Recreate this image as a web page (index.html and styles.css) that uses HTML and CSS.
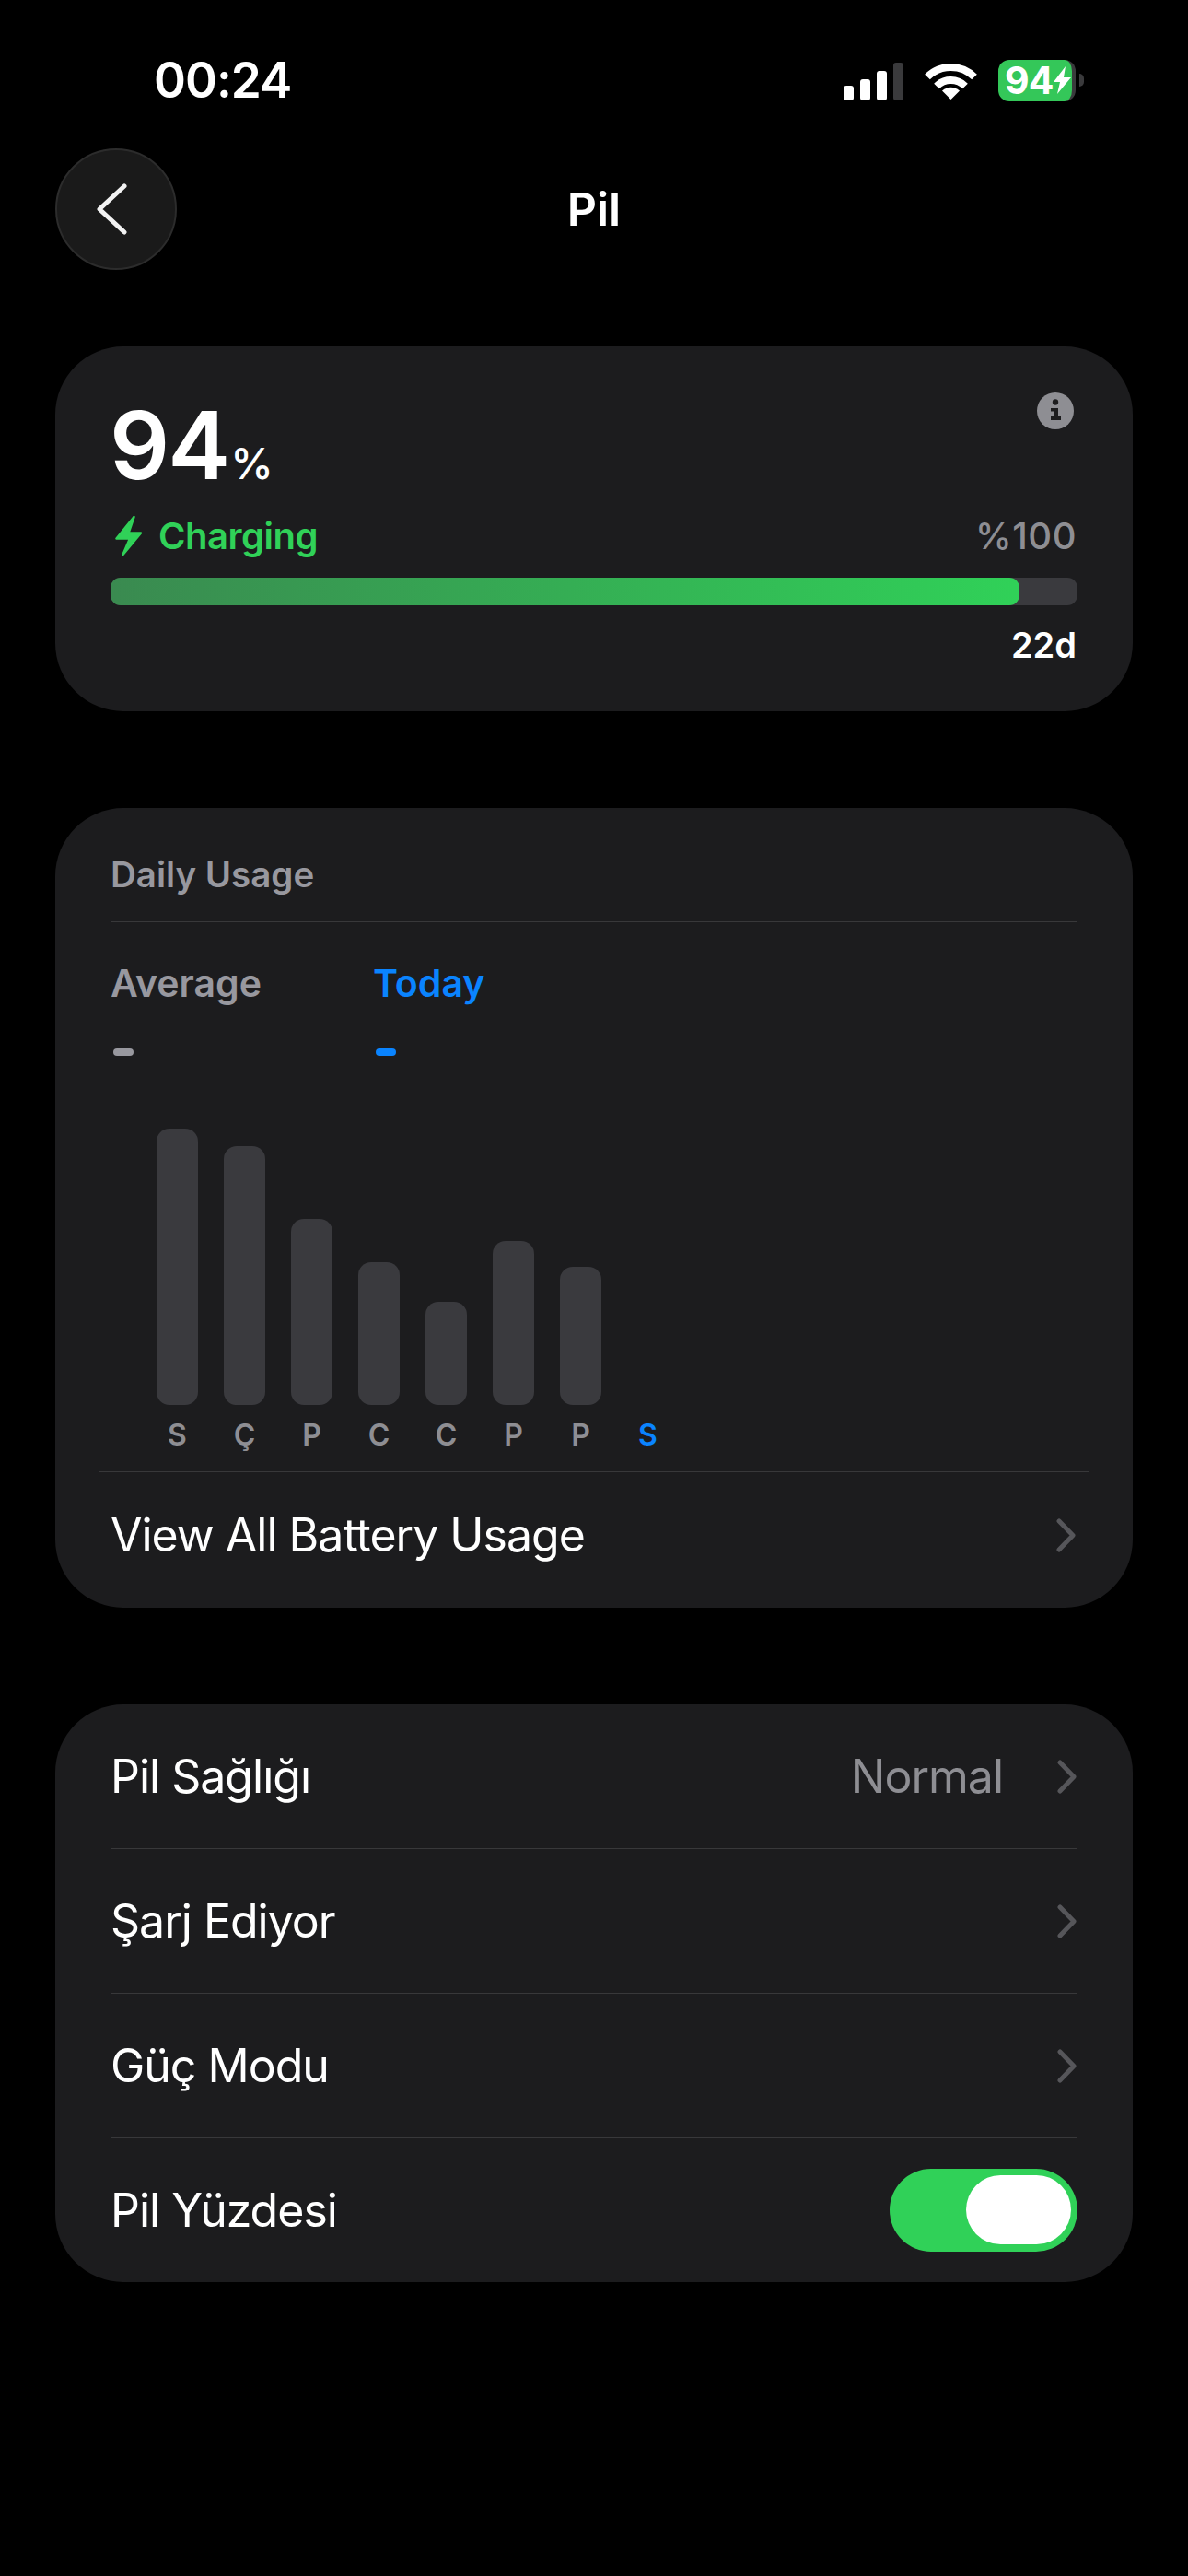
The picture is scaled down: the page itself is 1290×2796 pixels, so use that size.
FILE: index.html

```html
<!DOCTYPE html>
<html lang="tr">
<head>
<meta charset="utf-8">
<title>Pil</title>
<link rel="stylesheet" href="styles.css">
</head>
<body>
<div class="status">
  <span class="time">00:24</span>
  <div class="status-icons">
    <div class="signal">
      <i class="s1"></i><i class="s2"></i><i class="s3"></i><i class="s4"></i>
    </div>
    <svg class="wifi" width="57" height="42" viewBox="0 0 57 42">
      <path d="M3 17.500A36 36 0 0 1 54 17.500" fill="none" stroke="#fff" stroke-width="8"/>
      <path d="M13 27.500A22 22 0 0 1 44 27.500" fill="none" stroke="#fff" stroke-width="8"/>
      <path d="M28.500 42L19 32.500Q28.500 25 38 32.500Z" fill="#fff"/>
    </svg>
    <div class="battery">
      <div class="battery-body">
        <span class="battery-num">94</span>
        <svg width="19" height="30" viewBox="0 0 19 30"><path d="M13 0L0 17H7L4 30L19 12H11Z" fill="#fff"/></svg>
      </div>
      <div class="battery-cap"></div>
    </div>
  </div>
</div>

<div class="nav">
  <div class="back">
    <svg width="33" height="56" viewBox="0 0 33 56"><path d="M30 3L3 28L30 53" fill="none" stroke="#f2f2f2" stroke-width="5" stroke-linecap="round" stroke-linejoin="round"/></svg>
  </div>
  <div class="nav-title">Pil</div>
  <div class="nav-side"></div>
</div>

<div class="card card-level">
  <div class="level-top">
    <div class="level-num">94<span class="level-pct">%</span></div>
    <svg class="info" width="40" height="40" viewBox="0 0 40 40">
      <circle cx="20" cy="20" r="20" fill="#8e8e93"/>
      <circle cx="20" cy="10.500" r="3.200" fill="#1c1c1e"/>
      <path d="M15 17H23V26H26V30H15V26H18.500V20.500H15Z" fill="#1c1c1e"/>
    </svg>
  </div>
  <div class="level-state">
    <div class="charging">
      <svg width="30" height="45" viewBox="0 0 30 45"><path d="M20.500 2L1.500 25.500H16L8.500 43L28 19.500H14.500Z" fill="#30d158" stroke="#30d158" stroke-width="2.500" stroke-linejoin="round"/></svg>
      <span>Charging</span>
    </div>
    <span class="level-limit">%100</span>
  </div>
  <div class="level-bar"><div class="level-fill"></div></div>
  <div class="level-time">22d</div>
</div>

<div class="card card-usage">
  <div class="usage-head">Daily Usage</div>
  <div class="legend">
    <div class="legend-item">
      <span>Average</span>
      <div class="dash"></div>
    </div>
    <div class="legend-item today">
      <span>Today</span>
      <div class="dash"></div>
    </div>
  </div>
  <div class="chart">
    <div class="day"><div class="plot"><div class="bar" style="height:300px"></div></div><span>S</span></div>
    <div class="day"><div class="plot"><div class="bar" style="height:281px"></div></div><span>Ç</span></div>
    <div class="day"><div class="plot"><div class="bar" style="height:202px"></div></div><span>P</span></div>
    <div class="day"><div class="plot"><div class="bar" style="height:155px"></div></div><span>C</span></div>
    <div class="day"><div class="plot"><div class="bar" style="height:112px"></div></div><span>C</span></div>
    <div class="day"><div class="plot"><div class="bar" style="height:178px"></div></div><span>P</span></div>
    <div class="day"><div class="plot"><div class="bar" style="height:150px"></div></div><span>P</span></div>
    <div class="day today"><div class="plot"></div><span>S</span></div>
  </div>
  <div class="usage-foot">
    <span>View All Battery Usage</span>
    <svg class="chev" width="21" height="37" viewBox="0 0 21 37"><path d="M3 3L18 18.500L3 34" fill="none" stroke="#56565a" stroke-width="5" stroke-linecap="round" stroke-linejoin="round"/></svg>
  </div>
</div>

<div class="card card-list">
  <div class="row">
    <span class="row-label">Pil Sağlığı</span>
    <span class="row-value">Normal</span>
    <svg class="chev" width="21" height="37" viewBox="0 0 21 37"><path d="M3 3L18 18.500L3 34" fill="none" stroke="#56565a" stroke-width="5" stroke-linecap="round" stroke-linejoin="round"/></svg>
  </div>
  <div class="row">
    <span class="row-label">Şarj Ediyor</span>
    <svg class="chev" width="21" height="37" viewBox="0 0 21 37"><path d="M3 3L18 18.500L3 34" fill="none" stroke="#56565a" stroke-width="5" stroke-linecap="round" stroke-linejoin="round"/></svg>
  </div>
  <div class="row">
    <span class="row-label">Güç Modu</span>
    <svg class="chev" width="21" height="37" viewBox="0 0 21 37"><path d="M3 3L18 18.500L3 34" fill="none" stroke="#56565a" stroke-width="5" stroke-linecap="round" stroke-linejoin="round"/></svg>
  </div>
  <div class="row row-last">
    <span class="row-label">Pil Yüzdesi</span>
    <div class="toggle"><div class="knob"></div></div>
  </div>
</div>
</body>
</html>
```

FILE: styles.css

```css
html, body { margin: 0; background: #000; }
body { height: 2796px; overflow: hidden; color: #fff; font-family: Inter, "Noto Sans", sans-serif; }

/* status bar */
.status { display: flex; justify-content: space-between; align-items: center; height: 46px; padding: 64px 113px 0 167px; }
.time { font-size: 53px; font-weight: 600; line-height: 46px; letter-spacing: -1px; }
.status-icons { display: flex; align-items: center; }
.signal { display: flex; align-items: flex-end; gap: 7px; height: 41px; margin-top: 2px; }
.signal i { display: block; width: 11px; background: #fff; border-radius: 3px; }
.signal .s1 { height: 16px; }
.signal .s2 { height: 23px; }
.signal .s3 { height: 32px; }
.signal .s4 { height: 41px; background: #3a3a3c; }
.wifi { margin-left: 23px; }
.battery { display: flex; align-items: center; margin-left: 23px; }
.battery-body { display: flex; align-items: center; box-sizing: border-box; width: 84px; height: 45px; padding-left: 7px; background: #34c759; border-right: 4px solid #3a3a3c; border-radius: 12px; }
.battery-num { font-size: 41px; font-weight: 700; line-height: 45px; letter-spacing: -1px; margin-right: 1px; }
.battery-cap { width: 5px; height: 14px; margin-left: 4px; background: #3a3a3c; border-radius: 0 7px 7px 0; }

/* nav */
.nav { display: flex; justify-content: space-between; align-items: center; height: 132px; margin: 51px 60px 0; }
.back { display: flex; align-items: center; justify-content: center; box-sizing: border-box; width: 132px; height: 132px; padding-right: 9px; background: #1a1a1a; border: 2px solid #2c2c2c; border-radius: 50%; }
.nav-title { font-size: 50px; font-weight: 600; line-height: 60px; }
.nav-side { width: 132px; }

/* cards */
.card { box-sizing: border-box; width: 1170px; margin: 105px 0 0 60px; background: #1c1c1e; border-radius: 74px; }
.card-level { height: 396px; margin-top: 83px; padding: 50px 61px 0 59px; }

.level-top { display: flex; justify-content: space-between; align-items: flex-start; height: 114px; }
.level-num { font-size: 102px; font-weight: 600; line-height: 114px; letter-spacing: -2px; }
.level-pct { margin-left: 2px; font-size: 47px; font-weight: 500; letter-spacing: 0; }
.info { margin-right: 3px; }
.level-state { display: flex; justify-content: space-between; align-items: center; height: 47px; margin-top: 18px; }
.charging { display: flex; align-items: center; gap: 17px; margin-left: 6px; color: #30d158; font-size: 40px; font-weight: 600; letter-spacing: -0.5px; }
.level-limit { color: #8e8e93; font-size: 40px; font-weight: 500; letter-spacing: 0.5px; }
.level-bar { height: 30px; margin: 22px -1px 0 1px; background: #3a3a3e; border-radius: 11px; }
.level-fill { width: 94%; height: 100%; background: linear-gradient(90deg, #3a8a50, #30d158); border-radius: 11px; }
.level-time { margin-top: 23px; font-size: 38px; font-weight: 600; line-height: 40px; text-align: right; }

.card-usage { height: 868px; }
.usage-head { margin: 0 60px; padding: 48px 0 27px; color: #98989f; font-size: 38.500px; font-weight: 600; line-height: 48px; border-bottom: 1px solid #38383a; }
.legend { display: flex; margin: 42px 0 0 60px; font-size: 41px; font-weight: 600; line-height: 48px; color: #98989f; }
.legend-item { width: 285px; }
.legend-item.today { color: #0a84ff; }
.legend-item span { display: block; }
.dash { width: 22px; height: 8px; margin: 47px 0 0 3px; background: currentColor; border-radius: 4px; }

.chart { display: flex; margin-top: 79px; padding: 0 0 23px 96px; }
.day { display: flex; flex-direction: column; align-items: center; width: 73px; color: #8e8e93; font-size: 32px; font-weight: 600; line-height: 32px; }
.day.today { color: #0a84ff; }
.day span { margin-top: 17px; }
.plot { display: flex; align-items: flex-end; height: 300px; }
.bar { width: 45px; background: #3a3a3e; border-radius: 14px; }

.usage-foot { display: flex; justify-content: space-between; align-items: center; height: 136px; margin: 0 48px; padding: 0 13px 0 12px; border-top: 1px solid #38383a; font-size: 50px; letter-spacing: -1px; }

.card-list { padding: 0 60px; }
.row { display: flex; align-items: center; height: 156px; font-size: 50px; letter-spacing: -1px; border-bottom: 1px solid #38383a; }
.row-last { border-bottom: 0; }
.row-label { flex: 1; }
.row-value { margin-right: 59px; color: #8e8e93; }
.chev { display: block; margin-right: 1px; }
.toggle { display: flex; justify-content: flex-end; box-sizing: border-box; width: 204px; height: 90px; padding: 7px; background: #30d158; border-radius: 45px; }
.knob { width: 114px; height: 75px; background: #fff; border-radius: 38px; }
```
